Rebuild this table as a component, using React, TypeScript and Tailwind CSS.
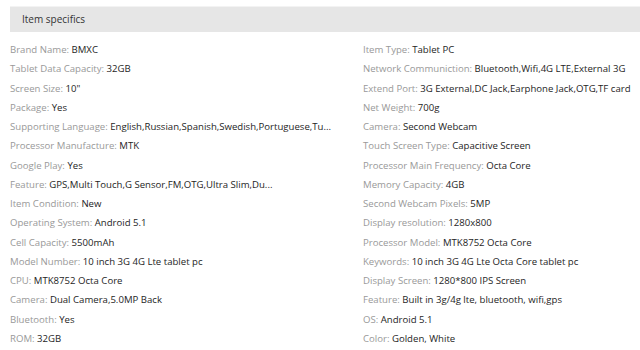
// Item specifics panel - two columns of label/value pairs
import React from 'react';

type Spec = { label: string; value: string };

const leftSpecs: Spec[] = [
    { label: 'Brand Name', value: 'BMXC' },
    { label: 'Tablet Data Capacity', value: '32GB' },
    { label: 'Screen Size', value: '10"' },
    { label: 'Package', value: 'Yes' },
    { label: 'Supporting Language', value: 'English,Russian,Spanish,Swedish,Portuguese,Tu...' },
    { label: 'Processor Manufacture', value: 'MTK' },
    { label: 'Google Play', value: 'Yes' },
    { label: 'Feature', value: 'GPS,Multi Touch,G Sensor,FM,OTG,Ultra Slim,Du...' },
    { label: 'Item Condition', value: 'New' },
    { label: 'Operating System', value: 'Android 5.1' },
    { label: 'Cell Capacity', value: '5500mAh' },
    { label: 'Model Number', value: '10 inch 3G 4G Lte tablet pc' },
    { label: 'CPU', value: 'MTK8752 Octa Core' },
    { label: 'Camera', value: 'Dual Camera,5.0MP Back' },
    { label: 'Bluetooth', value: 'Yes' },
    { label: 'ROM', value: '32GB' },
];

const rightSpecs: Spec[] = [
    { label: 'Item Type', value: 'Tablet PC' },
    { label: 'Network Communiction', value: 'Bluetooth,Wifi,4G LTE,External 3G' },
    { label: 'Extend Port', value: '3G External,DC Jack,Earphone Jack,OTG,TF card' },
    { label: 'Net Weight', value: '700g' },
    { label: 'Camera', value: 'Second Webcam' },
    { label: 'Touch Screen Type', value: 'Capacitive Screen' },
    { label: 'Processor Main Frequency', value: 'Octa Core' },
    { label: 'Memory Capacity', value: '4GB' },
    { label: 'Second Webcam Pixels', value: '5MP' },
    { label: 'Display resolution', value: '1280x800' },
    { label: 'Processor Model', value: 'MTK8752 Octa Core' },
    { label: 'Keywords', value: '10 inch 3G 4G Lte Octa Core tablet pc' },
    { label: 'Display Screen', value: '1280*800 IPS Screen' },
    { label: 'Feature', value: 'Built in 3g/4g lte, bluetooth, wifi,gps' },
    { label: 'OS', value: 'Android 5.1' },
    { label: 'Color', value: 'Golden, White' },
];

const SpecRow: React.FC<{ spec: Spec }> = ({ spec }) => (
    <li className="h-[19.25px] leading-[19.25px] whitespace-nowrap">
        <span className="text-[#999999]">{spec.label}: </span>
        <span className="text-[#1e1e1e]">{spec.value}</span>
    </li>
);

export default function App() {
    return (
        <div className="w-[640px] h-[350px] bg-white overflow-hidden pt-[6px] pl-[10px] font-['Open_Sans',sans-serif]">
            {/* Header */}
            <div className="h-[26px] bg-[#e6e6e6] border-t border-[#f3f3f3] flex items-center pl-[12px] text-[10px] text-[#333333]">
                Item specifics
            </div>

            {/* Specs */}
            <div className="flex mt-[8px] text-[9.6px]">
                <ul className="w-[353px]">
                    {leftSpecs.map((s, i) => (
                        <SpecRow key={i} spec={s} />
                    ))}
                </ul>
                <ul className="flex-1">
                    {rightSpecs.map((s, i) => (
                        <SpecRow key={i} spec={s} />
                    ))}
                </ul>
            </div>
        </div>
    );
}
